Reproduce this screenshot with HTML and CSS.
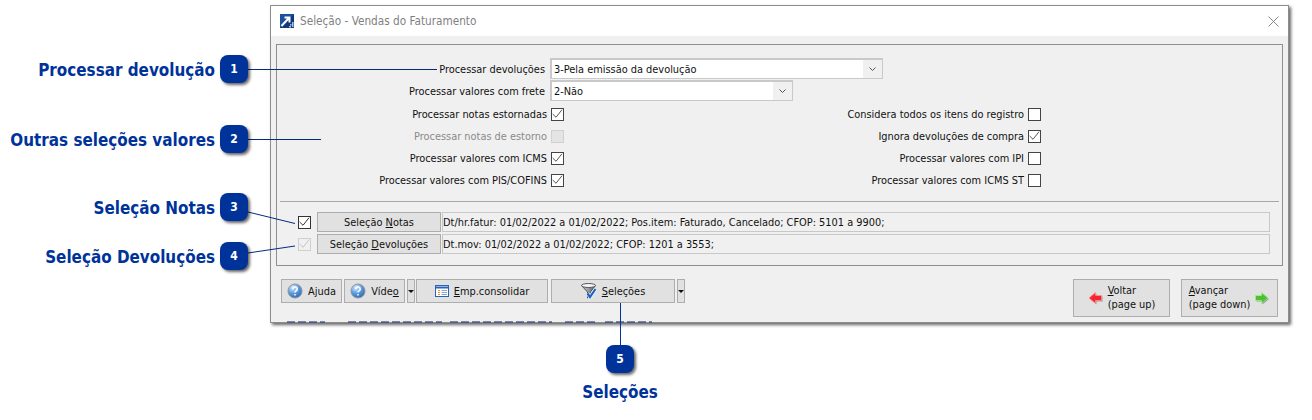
FILE: index.html
```html
<!DOCTYPE html>
<html lang="pt-BR">
<head>
<meta charset="utf-8">
<title>Seleção - Vendas do Faturamento</title>
<link rel="stylesheet" href="styles.css">
</head>
<body>
<main class="canvas">
  <section class="window">
    <header class="titlebar">
      <svg class="app-icon" viewBox="0 0 14 14"><rect width="14" height="14" fill="#1c4f9c"/><path d="M0 14 14 0v14z" fill="#12387c"/><path d="M1.500 12 8.500 4.500M4.500 3.500h5v5" fill="none" stroke="#fff" stroke-width="2"/><path d="M10 10h1.500v1.500H10zM12 8h1.500v5H12zM9 12h2v1.500H9z" fill="#a9c5e6"/></svg>
      <span class="title">Seleção - Vendas do Faturamento</span>
      <svg class="close" viewBox="0 0 11 11"><path d="M.5.500l10 10M10.500.500l-10 10" stroke="#888" fill="none"/></svg>
    </header>
    <div class="panel">
      <div class="form">
        <div class="row">
          <span class="label">Processar devoluções</span>
          <div class="combo combo-wide"><span class="combo-text">3-Pela emissão da devolução</span><span class="combo-btn"><svg class="chev" viewBox="0 0 7 4"><path d="M.5.500 3.500 3.500 6.500.500" fill="none" stroke="#555"/></svg></span></div>
        </div>
        <div class="row">
          <span class="label">Processar valores com frete</span>
          <div class="combo combo-narrow"><span class="combo-text">2-Não</span><span class="combo-btn"><svg class="chev" viewBox="0 0 7 4"><path d="M.5.500 3.500 3.500 6.500.500" fill="none" stroke="#555"/></svg></span></div>
        </div>
        <div class="checks">
          <div class="check-row"><span class="label-c">Processar notas estornadas</span><span class="box on"><svg viewBox="0 0 11 11"><path d="M.7 5 4 8.300 10 .7" fill="none" stroke="#555"/></svg></span></div>
          <div class="check-row right"><span class="label-c">Considera todos os itens do registro</span><span class="box"></span></div>
          <div class="check-row"><span class="label-c muted">Processar notas de estorno</span><span class="box off"></span></div>
          <div class="check-row right"><span class="label-c">Ignora devoluções de compra</span><span class="box on"><svg viewBox="0 0 11 11"><path d="M.7 5 4 8.300 10 .7" fill="none" stroke="#555"/></svg></span></div>
          <div class="check-row"><span class="label-c">Processar valores com ICMS</span><span class="box on"><svg viewBox="0 0 11 11"><path d="M.7 5 4 8.300 10 .7" fill="none" stroke="#555"/></svg></span></div>
          <div class="check-row right"><span class="label-c">Processar valores com IPI</span><span class="box"></span></div>
          <div class="check-row"><span class="label-c">Processar valores com PIS/COFINS</span><span class="box on"><svg viewBox="0 0 11 11"><path d="M.7 5 4 8.300 10 .7" fill="none" stroke="#555"/></svg></span></div>
          <div class="check-row right"><span class="label-c">Processar valores com ICMS ST</span><span class="box"></span></div>
        </div>
      </div>
      <hr class="sep">
      <div class="filters">
        <div class="filter">
          <span class="box strong on"><svg viewBox="0 0 11 11"><path d="M.7 5 4 8.300 10 .7" fill="none" stroke="#333"/></svg></span>
          <button class="btn filter-btn">Seleção <u>N</u>otas</button>
          <div class="summary">Dt/hr.fatur: 01/02/2022 a 01/02/2022; Pos.item: Faturado, Cancelado; CFOP: 5101 a 9900;</div>
        </div>
        <div class="filter">
          <span class="box disabled"><svg viewBox="0 0 11 11"><path d="M.7 5 4 8.300 10 .7" fill="none" stroke="#c4c4c4"/></svg></span>
          <button class="btn filter-btn">Seleção <u>D</u>evoluções</button>
          <div class="summary">Dt.mov: 01/02/2022 a 01/02/2022; CFOP: 1201 a 3553;</div>
        </div>
      </div>
    </div>
    <footer class="toolbar">
      <div class="tools">
        <button class="btn tool ajuda"><svg class="ico" viewBox="0 0 16 16"><defs><radialGradient id="ball" cx=".35" cy=".25" r=".85"><stop offset="0" stop-color="#dcecfb"/><stop offset=".5" stop-color="#5a9be0"/><stop offset="1" stop-color="#2a5fa8"/></radialGradient></defs><circle cx="8" cy="8" r="7" fill="url(#ball)" stroke="#8a95a3"/><path d="M5.800 6.200c0-3 4.600-2.800 4.400 0 0 1.800-2.200 1.500-2.200 3.300M8 11v1.500" fill="none" stroke="#fff" stroke-width="1.500"/></svg><span>A<u>j</u>uda</span></button>
        <button class="btn tool video"><svg class="ico" viewBox="0 0 16 16"><circle cx="8" cy="8" r="7" fill="url(#ball)" stroke="#8a95a3"/><path d="M5.800 6.200c0-3 4.600-2.800 4.400 0 0 1.800-2.200 1.500-2.200 3.300M8 11v1.500" fill="none" stroke="#fff" stroke-width="1.500"/></svg><span>Víde<u>o</u></span></button>
        <button class="btn drop"><i class="tri"></i></button>
        <button class="btn tool emp"><svg class="ico" viewBox="0 0 14 12"><rect x=".5" y=".5" width="13" height="11" fill="#fff" stroke="#2a62b8"/><path d="M1 2.500h12" stroke="#2a62b8" stroke-width="2"/><path d="M3 5.500h2M3 7.500h2M3 9.500h2" stroke="#e8912c"/><path d="M6.500 5.500H12M6.500 7.500H12M6.500 9.500H12" stroke="#7fa6d8"/></svg><span><u>E</u>mp.consolidar</span></button>
        <button class="btn tool sel"><svg class="ico funnel" viewBox="0 0 16 16"><defs><linearGradient id="metal" x1="0" x2="1"><stop offset="0" stop-color="#d4d7da"/><stop offset=".55" stop-color="#8f959b"/><stop offset="1" stop-color="#4f555b"/></linearGradient></defs><path d="M.5 2.500 6.500 9v6l3-1.500V9l5-6.500z" fill="url(#metal)" stroke="#4f555b"/><ellipse cx="7.500" cy="2.500" rx="7" ry="2" fill="#f4f4f4" stroke="#4f555b"/><path d="M6.500 10.500 9 14l5.500-8" fill="none" stroke="#fff" stroke-width="3.400"/><path d="M6.500 10.500 9 14l5.500-8" fill="none" stroke="#1d62c4" stroke-width="2.200"/></svg><span><u>S</u>eleções</span></button>
        <button class="btn drop"><i class="tri"></i></button>
      </div>
      <div class="nav">
        <button class="btn navbtn"><svg class="arrow" viewBox="0 0 15 13"><path d="M14.500 4.500h-6V1.500L2 7l6.500 5.500V9.500h6z" fill="#9a9a9a"/><path d="M13.500 3.500h-6V.5L1 6l6.500 5.500v-3h6z" fill="#f4262f" stroke="#ff8f94" stroke-width=".8"/></svg><span class="navtext"><u>V</u>oltar<br>(page up)</span></button>
        <button class="btn navbtn"><span class="navtext"><u>A</u>vançar<br>(page down)</span><svg class="arrow" viewBox="0 0 15 13"><path d="M1.500 4.500h6V1.500L14 7l-6.500 5.500V9.500h-6z" fill="#9a9a9a"/><path d="M.5 3.500h6V.5L13 6l-6.500 5.500v-3h-6z" fill="#4cc232" stroke="#a8ea92" stroke-width=".8"/></svg></button>
      </div>
    </footer>
  </section>
  <div class="behind"><i class="seg s1"></i><i class="seg s2"></i><i class="seg s3"></i><i class="seg s4"></i><i class="seg s5"></i></div>

  <svg class="leaders" viewBox="0 0 1312 420">
    <path d="M248 69.500H437M248 139.500H321M248 212 295 223.500M248 253 295 246" fill="none" stroke="#002d80"/>
    <path d="M620.500 303V345" fill="none" stroke="#003399"/>
  </svg>

  <div class="callout c1"><span class="callout-text">Processar devolução</span><b class="badge">1</b></div>
  <div class="callout c2"><span class="callout-text">Outras seleções valores</span><b class="badge">2</b></div>
  <div class="callout c3"><span class="callout-text">Seleção Notas</span><b class="badge">3</b></div>
  <div class="callout c4"><span class="callout-text">Seleção Devoluções</span><b class="badge">4</b></div>
  <div class="callout-v c5"><b class="badge">5</b><span class="callout-text">Seleções</span></div>
</main>
</body>
</html>
```
FILE: styles.css
```css
* { box-sizing: border-box; }
html, body { margin: 0; background: #fff; }
body { font-family: "DejaVu Sans", sans-serif; font-stretch: condensed; font-size: 10.9px; color: #111; }
.canvas { position: relative; width: 1312px; height: 420px; overflow: hidden; }
.behind { position: absolute; left: 287px; top: 321px; height: 2px; display: flex; opacity: .6; }
.seg { display: block; height: 2px; background: repeating-linear-gradient(90deg, #2c3f78 0 8px, transparent 8px 11px); }
.s1 { width: 38px; margin-right: 23px; }
.s2 { width: 94px; margin-right: 8px; }
.s3 { width: 102px; margin-right: 13px; }
.s4 { width: 33px; margin-right: 7px; }
.s5 { width: 47px; }

.window { position: absolute; left: 270px; top: 5px; width: 1019px; height: 318px; background: #f0f0f0; border: 1px solid #8d8d8d; box-shadow: 2px 2px 3px rgba(0,0,0,.6); display: flex; flex-direction: column; }
.titlebar { height: 30px; flex: none; background: #fff; display: flex; align-items: center; padding: 0 9px 0 9px; }
.app-icon { width: 14px; height: 14px; flex: none; }
.title { margin-left: 6px; color: #7f7f7f; font-size: 11.7px; flex: 1; }
.close { width: 11px; height: 11px; flex: none; }

.panel { margin: 8px 5px 0; height: 222px; flex: none; border: 1px solid #8f8f8f; display: flex; flex-direction: column; padding: 13px 3px 0; }
.form { height: 143px; flex: none; }
.row { height: 22px; display: flex; align-items: flex-start; }
.label { width: 265px; padding-top: 5px; text-align: right; flex: none; }
.combo { height: 21px; margin-left: 5px; background: #fff; border-style: solid; border-color: #c9c9c9; border-width: 2px 1px 1px 2px; display: flex; align-items: center; justify-content: space-between; padding-left: 2px; }
.combo-wide { width: 333px; }
.combo-narrow { width: 243px; }
.combo-btn { width: 19px; height: 100%; background: #f0f0f0; display: flex; align-items: center; justify-content: center; }
.chev { width: 7px; height: 4px; }
.checks { margin-top: 1px; display: grid; grid-template-columns: 284px 477px; grid-auto-rows: 22px; }
.check-row { display: flex; align-items: center; justify-content: flex-end; gap: 4px; }
.box { width: 13px; height: 13px; flex: none; background: #fff; border: 1px solid #444; display: block; }
.box svg { display: block; width: 11px; height: 11px; }
.off { background: #e4e4e4; border-color: #d0d0d0; }
.muted { color: #8a8a8a; }
.sep { margin: 0; height: 0; border: 0; border-top: 1px solid #a8a8a8; }

.btn { font: inherit; color: #111; background: #e1e1e1; border: 1px solid #adadad; padding: 0; }
.btn u { text-underline-offset: 1px; }
.filters { padding: 10px 0 0 18px; display: flex; flex-direction: column; gap: 2px; }
.filter { display: flex; align-items: center; height: 20px; }
.strong { border-color: #333; }
.disabled { background: #f0f0f0; border-color: #cfcfcf; }
.filter-btn { width: 124px; height: 20px; margin-left: 6px; }
.summary { width: 828px; height: 20px; margin-left: 1px; background: #f0f0f0; border: 1px solid #c8c8c8; padding: 3px 0 0 0; white-space: nowrap; }

.toolbar { flex: 1; padding: 13px 10px 0 10px; display: flex; justify-content: space-between; align-items: flex-start; }
.tools { display: flex; height: 24px; }
.tool { height: 24px; display: flex; align-items: center; justify-content: center; gap: 5px; }
.ico { width: 16px; height: 16px; flex: none; }
.ajuda { width: 61px; margin-right: 2px; }
.video { width: 61px; margin-right: 2px; }
.drop { width: 8px; height: 24px; margin-right: 1px; display: flex; align-items: center; justify-content: center; }
.emp { width: 132px; margin-right: 3px; }
.emp .ico { width: 14px; height: 12px; }
.sel { width: 124px; margin-right: 2px; }
.tri { width: 0; height: 0; border: 3px solid transparent; border-top: 3px solid #111; border-bottom: 0; display: block; }
.nav { display: flex; gap: 11px; }
.navbtn { width: 97px; height: 38px; display: flex; align-items: center; justify-content: center; gap: 5px; text-align: left; line-height: 14px; }
.arrow { width: 15px; height: 13px; flex: none; }
.navtext { display: block; }

.leaders { position: absolute; left: 0; top: 0; width: 1312px; height: 420px; pointer-events: none; }
.callout { position: absolute; right: 1064px; display: flex; align-items: center; gap: 5px; height: 28px; }
.c1 { top: 55px; }
.c2 { top: 125px; }
.c3 { top: 193px; }
.c4 { top: 242px; }
.callout-v { position: absolute; left: 560px; top: 345px; width: 120px; display: flex; flex-direction: column; align-items: center; gap: 7px; }
.callout-text { font-size: 16.9px; font-weight: bold; color: #003399; white-space: nowrap; line-height: 20px; padding-top: 2px; }
.badge { width: 28px; height: 28px; border-radius: 8px; background: #003399; color: #fff; font-size: 12px; font-weight: bold; display: flex; align-items: center; justify-content: center; box-shadow: 2px 2px 3px rgba(0,0,0,.6); flex: none; }
```
